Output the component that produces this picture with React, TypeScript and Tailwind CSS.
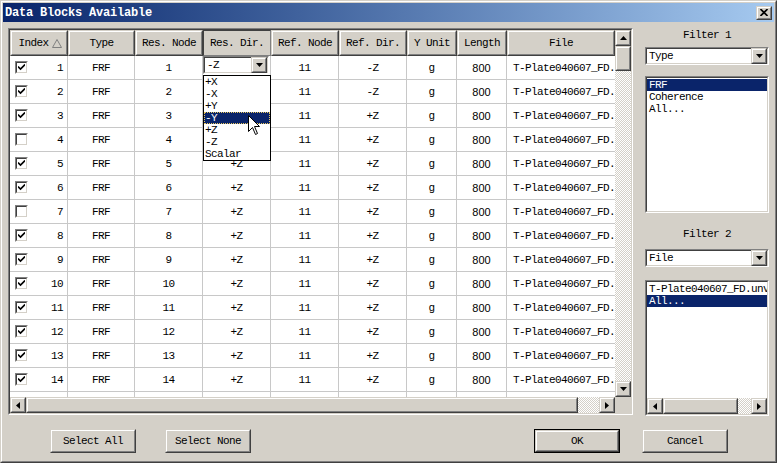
import React from "react";

const mono = "font-['Liberation_Mono','DejaVu_Sans_Mono',monospace] text-[11px] tracking-[-0.6px] leading-[12px]";
const checker = "bg-[repeating-conic-gradient(#d4d0c8_0_25%,#ffffff_0_50%)] bg-[length:2px_2px]";

const Raised = ({ className = "", inner = "", children }: { className?: string; inner?: string; children?: React.ReactNode }) => (
  <div className={`border border-t-[#d4d0c8] border-l-[#d4d0c8] border-r-[#404040] border-b-[#404040] bg-[#d4d0c8] ${className}`}>
    <div className={`w-full h-full border border-t-white border-l-white border-r-[#808080] border-b-[#808080] ${inner}`}>{children}</div>
  </div>
);

const Sunken = ({ className = "", inner = "", children }: { className?: string; inner?: string; children?: React.ReactNode }) => (
  <div className={`border border-t-[#808080] border-l-[#808080] border-r-white border-b-white ${className}`}>
    <div className={`w-full h-full border border-t-[#404040] border-l-[#404040] border-r-[#d4d0c8] border-b-[#d4d0c8] ${inner}`}>{children}</div>
  </div>
);

const Arrow = ({ dir }: { dir: "up" | "down" | "left" | "right" }) => {
  if (dir === "up") return <svg width="7" height="4" viewBox="0 0 7 4"><polygon points="3.5,0 7,4 0,4" fill="#000" /></svg>;
  if (dir === "down") return <svg width="7" height="4" viewBox="0 0 7 4"><polygon points="0,0 7,0 3.5,4" fill="#000" /></svg>;
  if (dir === "left") return <svg width="4" height="7" viewBox="0 0 4 7"><polygon points="4,0 4,7 0,3.5" fill="#000" /></svg>;
  return <svg width="4" height="7" viewBox="0 0 4 7"><polygon points="0,0 4,3.5 0,7" fill="#000" /></svg>;
};

const SBtn = ({ dir, className = "" }: { dir: "up" | "down" | "left" | "right"; className?: string }) => (
  <Raised className={`w-[16px] h-[16px] shrink-0 ${className}`} inner="flex items-center justify-center">
    <Arrow dir={dir} />
  </Raised>
);

const Check = ({ on }: { on: boolean }) => (
  <Sunken className="w-[13px] h-[13px] shrink-0" inner="bg-white flex items-center justify-center">
    {on && (
      <svg width="7" height="7" viewBox="0 0 7 7">
        <path d="M0 2.5 L2.5 5 L7 0.5" stroke="#000" strokeWidth="1.6" fill="none" />
      </svg>
    )}
  </Sunken>
);

const cols = [
  { label: "Index", w: "w-[58px]" },
  { label: "Type", w: "w-[67px]" },
  { label: "Res. Node", w: "w-[68px]" },
  { label: "Res. Dir.", w: "w-[68px]" },
  { label: "Ref. Node", w: "w-[68px]" },
  { label: "Ref. Dir.", w: "w-[68px]" },
  { label: "Y Unit", w: "w-[50px]" },
  { label: "Length", w: "w-[50px]" },
  { label: "File", w: "w-[108px]" },
];

const unchecked = [4, 7];
const rows = Array.from({ length: 15 }, (_, i) => {
  const n = i + 1;
  return { n, on: !unchecked.includes(n), refDir: n <= 2 ? "-Z" : "+Z" };
});

const dirOptions = ["+X", "-X", "+Y", "-Y", "+Z", "-Z", "Scalar"];

const cell = "flex items-center justify-center border-r border-b border-[#c8c8c8] shrink-0";

const ResDirCombo = () => (
  <div className="relative w-full h-full">
    <Sunken className="w-[66px] h-[18px] bg-white" inner="bg-white flex items-center pl-[2px]">
      <span className="flex-1">-Z</span>
      <SBtn dir="down" className="h-[14px] w-[16px]" />
    </Sunken>
    <div className="absolute z-10 left-0 top-[19px] w-[68px] border border-black bg-white">
      {dirOptions.map((o) => (
        <div
          key={o}
          className={`h-[12px] pl-[1px] whitespace-nowrap ${o === "-Y" ? "bg-[#0a246a] text-white outline outline-1 outline-dotted outline-[#e8c860] -outline-offset-1" : ""}`}
        >
          {o}
        </div>
      ))}
    </div>
  </div>
);

const Grid = () => (
  <Sunken className="w-[625px] h-[387px]" inner="flex flex-col bg-[#d4d0c8]">
    <div className="flex h-[367px]">
      <div className="w-[605px] bg-white overflow-hidden">
        <div className="flex h-[26px]">
          {cols.map((c) =>
            c.label === "Res. Dir." ? (
              <div key={c.label} className={`${c.w} shrink-0 h-full border border-t-[#404040] border-l-[#404040] border-r-[#808080] border-b-[#808080] bg-[#d4d0c8] flex items-center justify-center`}>
                {c.label}
              </div>
            ) : (
              <Raised key={c.label} className={`${c.w} shrink-0 h-full`} inner="flex items-center justify-center">
                {c.label === "Index" ? (
                  <span className="flex items-center gap-[3px] pl-[2px]">
                    Index
                    <svg width="10" height="9" viewBox="0 0 10 9">
                      <polygon points="5,0.5 9.5,8.5 0.5,8.5" fill="none" stroke="#808080" strokeWidth="1" />
                    </svg>
                  </span>
                ) : (
                  c.label
                )}
              </Raised>
            )
          )}
        </div>
        {rows.map((r) => (
          <div key={r.n} className="flex h-[24px]">
            <div className={`w-[58px] flex items-center border-r border-b border-[#c8c8c8] pl-[5px] pr-[4px] shrink-0`}>
              <Check on={r.on} />
              <span className="ml-auto">{r.n}</span>
            </div>
            <div className={`w-[67px] ${cell}`}>FRF</div>
            <div className={`w-[68px] ${cell}`}>{r.n}</div>
            <div className={`w-[68px] ${r.n === 1 ? "flex items-start shrink-0 border-r border-b border-[#c8c8c8]" : cell}`}>
              {r.n === 1 ? <ResDirCombo /> : "+Z"}
            </div>
            <div className={`w-[68px] ${cell}`}>11</div>
            <div className={`w-[68px] ${cell}`}>{r.refDir}</div>
            <div className={`w-[50px] ${cell}`}>g</div>
            <div className={`w-[50px] ${cell} font-['Liberation_Sans',Arial,sans-serif] tracking-normal text-[11px]`}>800</div>
            <div className={`w-[108px] flex items-center border-b border-[#c8c8c8] shrink-0 overflow-hidden whitespace-nowrap pl-[6px]`}>
              T-Plate040607_FD.unv
            </div>
          </div>
        ))}
      </div>
      <div className="w-[16px] flex flex-col">
        <SBtn dir="up" />
        <Raised className="w-[16px] h-[25px] shrink-0" />
        <div className={`flex-1 ${checker}`} />
        <SBtn dir="down" />
      </div>
    </div>
    <div className="flex h-[16px]">
      <SBtn dir="left" />
      <Raised className="w-[552px] h-[16px] shrink-0" />
      <div className={`flex-1 ${checker}`} />
      <SBtn dir="right" />
      <div className="w-[16px] shrink-0 bg-[#d4d0c8]" />
    </div>
  </Sunken>
);

const Combo = ({ value }: { value: string }) => (
  <Sunken className="w-[124px] h-[18px]" inner="bg-white flex items-center pl-[2px]">
    <span className="flex-1">{value}</span>
    <SBtn dir="down" className="h-[14px] w-[16px]" />
  </Sunken>
);

const Panel = () => (
  <div className="w-[124px] flex flex-col">
    <div className="h-[19px] pt-[1px] text-center">Filter 1</div>
    <Combo value="Type" />
    <Sunken className="w-[124px] h-[137px] mt-[11px]" inner="bg-white pt-[1px]">
      <div className="h-[12px] bg-[#0a246a] text-white pl-[2px]">FRF</div>
      <div className="h-[12px] pl-[2px]">Coherence</div>
      <div className="h-[12px] pl-[2px]">All...</div>
    </Sunken>
    <div className="h-[36px] pt-[15px] text-center">Filter 2</div>
    <Combo value="File" />
    <Sunken className="w-[124px] h-[136px] mt-[13px]" inner="bg-white flex flex-col">
      <div className="flex-1 pt-[1px] overflow-hidden">
        <div className="h-[12px] pl-[2px] whitespace-nowrap">T-Plate040607_FD.unv</div>
        <div className="h-[12px] bg-[#0a246a] text-white pl-[2px]">All...</div>
      </div>
      <div className="flex h-[16px]">
        <SBtn dir="left" />
        <Raised className="w-[75px] h-[16px] shrink-0" />
        <div className={`flex-1 ${checker}`} />
        <SBtn dir="right" />
      </div>
    </Sunken>
  </div>
);

const Btn = ({ label, def = false }: { label: string; def?: boolean }) =>
  def ? (
    <div className="w-[86px] h-[24px] border border-black">
      <Raised className="w-full h-full" inner="flex items-center justify-center">{label}</Raised>
    </div>
  ) : (
    <Raised className="w-[86px] h-[24px]" inner="flex items-center justify-center">{label}</Raised>
  );

const Cursor = () => (
  <svg className="absolute left-[247px] top-[114px] z-20" width="12" height="20" viewBox="0 0 12 20">
    <path d="M0.5 0.5 L0.5 16.5 L4.5 12.5 L7.5 19.5 L9.5 18.5 L6.5 11.5 L11.5 11.5 Z" fill="#fff" stroke="#000" strokeWidth="1" />
  </svg>
);

export default function App() {
  return (
    <div className={`relative w-[777px] h-[463px] bg-[#d4d0c8] border border-t-[#d4d0c8] border-l-[#d4d0c8] border-r-[#404040] border-b-[#404040] ${mono} text-black`}>
      <div className="w-full h-full border border-t-white border-l-white border-r-[#808080] border-b-[#808080] p-[1px] flex flex-col">
        <div className="h-[19px] flex items-center bg-gradient-to-r from-[#0a246a] to-[#a6caf0] pl-[2px] pr-[2px] shrink-0">
          <span className="text-white font-bold text-[12px] tracking-[-0.2px]">Data Blocks Available</span>
          <Raised className="ml-auto w-[16px] h-[14px]" inner="flex items-center justify-center">
            <svg width="8" height="7" viewBox="0 0 8 7">
              <path d="M0.5 0 L7.5 7 M7.5 0 L0.5 7" stroke="#000" strokeWidth="1.6" />
            </svg>
          </Raised>
        </div>
        <div className="flex mt-[6px] pl-[5px]">
          <Grid />
          <div className="ml-[12px]">
            <Panel />
          </div>
        </div>
        <div className="flex mt-[13px]">
          <div className="flex ml-[47px] gap-[29px]">
            <Btn label="Select All" />
            <Btn label="Select None" />
          </div>
          <div className="flex ml-auto mr-[46px] gap-[22px]">
            <Btn label="OK" def />
            <Btn label="Cancel" />
          </div>
        </div>
      </div>
      <Cursor />
    </div>
  );
}
